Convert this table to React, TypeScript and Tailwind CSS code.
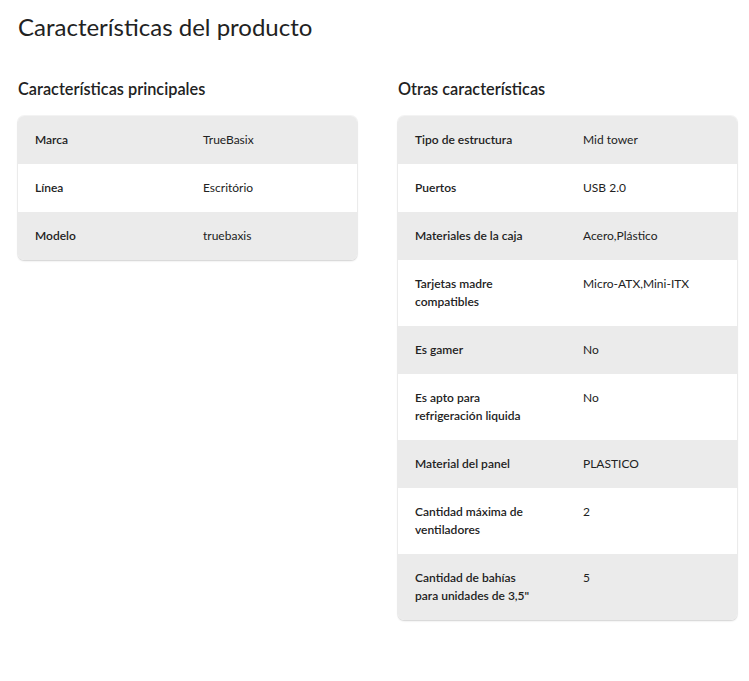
import React from "react";

// Spec tables for the product page
type Row = [string, string];

const principales: Row[] = [
  ["Marca", "TrueBasix"],
  ["Línea", "Escritório"],
  ["Modelo", "truebaxis"],
];

const otras: Row[] = [
  ["Tipo de estructura", "Mid tower"],
  ["Puertos", "USB 2.0"],
  ["Materiales de la caja", "Acero,Plástico"],
  ["Tarjetas madre compatibles", "Micro-ATX,Mini-ITX"],
  ["Es gamer", "No"],
  ["Es apto para refrigeración liquida", "No"],
  ["Material del panel", "PLASTICO"],
  ["Cantidad máxima de ventiladores", "2"],
  ["Cantidad de bahías para unidades de 3,5\"", "5"],
];

function SpecTable({ title, rows }: { title: string; rows: Row[] }) {
  return (
    <div className="flex-1">
      <h3 className="text-[16.3px] leading-[20px] font-semibold text-[#222] mb-[17px]">{title}</h3>
      <div className="rounded-[6px] overflow-hidden shadow-[0_0_0_1px_rgba(0,0,0,0.04),0_1px_2px_rgba(0,0,0,0.15)]">
        {rows.map(([k, v], i) => (
          <div
            key={k}
            className={`flex text-[12px] leading-[18px] text-[#222] ${i % 2 === 0 ? "bg-[#ebebeb]" : "bg-white"}`}
          >
            <div className="w-[185px] shrink-0 pl-[17px] pr-[52px] py-[15px] font-semibold">{k}</div>
            <div className="flex-1 py-[15px] pr-[16px]">{v}</div>
          </div>
        ))}
      </div>
    </div>
  );
}

export default function App() {
  return (
    <div
      className="min-h-screen bg-white px-[18px] pt-[12px]"
      style={{ fontFamily: "Lato, 'Open Sans', sans-serif" }}
    >
      <h2 className="text-[24px] leading-[30px] font-normal text-[#222]">Características del producto</h2>
      <div className="flex gap-[41px] mt-[37px] w-[719px] items-start">
        <SpecTable title="Características principales" rows={principales} />
        <SpecTable title="Otras características" rows={otras} />
      </div>
    </div>
  );
}
